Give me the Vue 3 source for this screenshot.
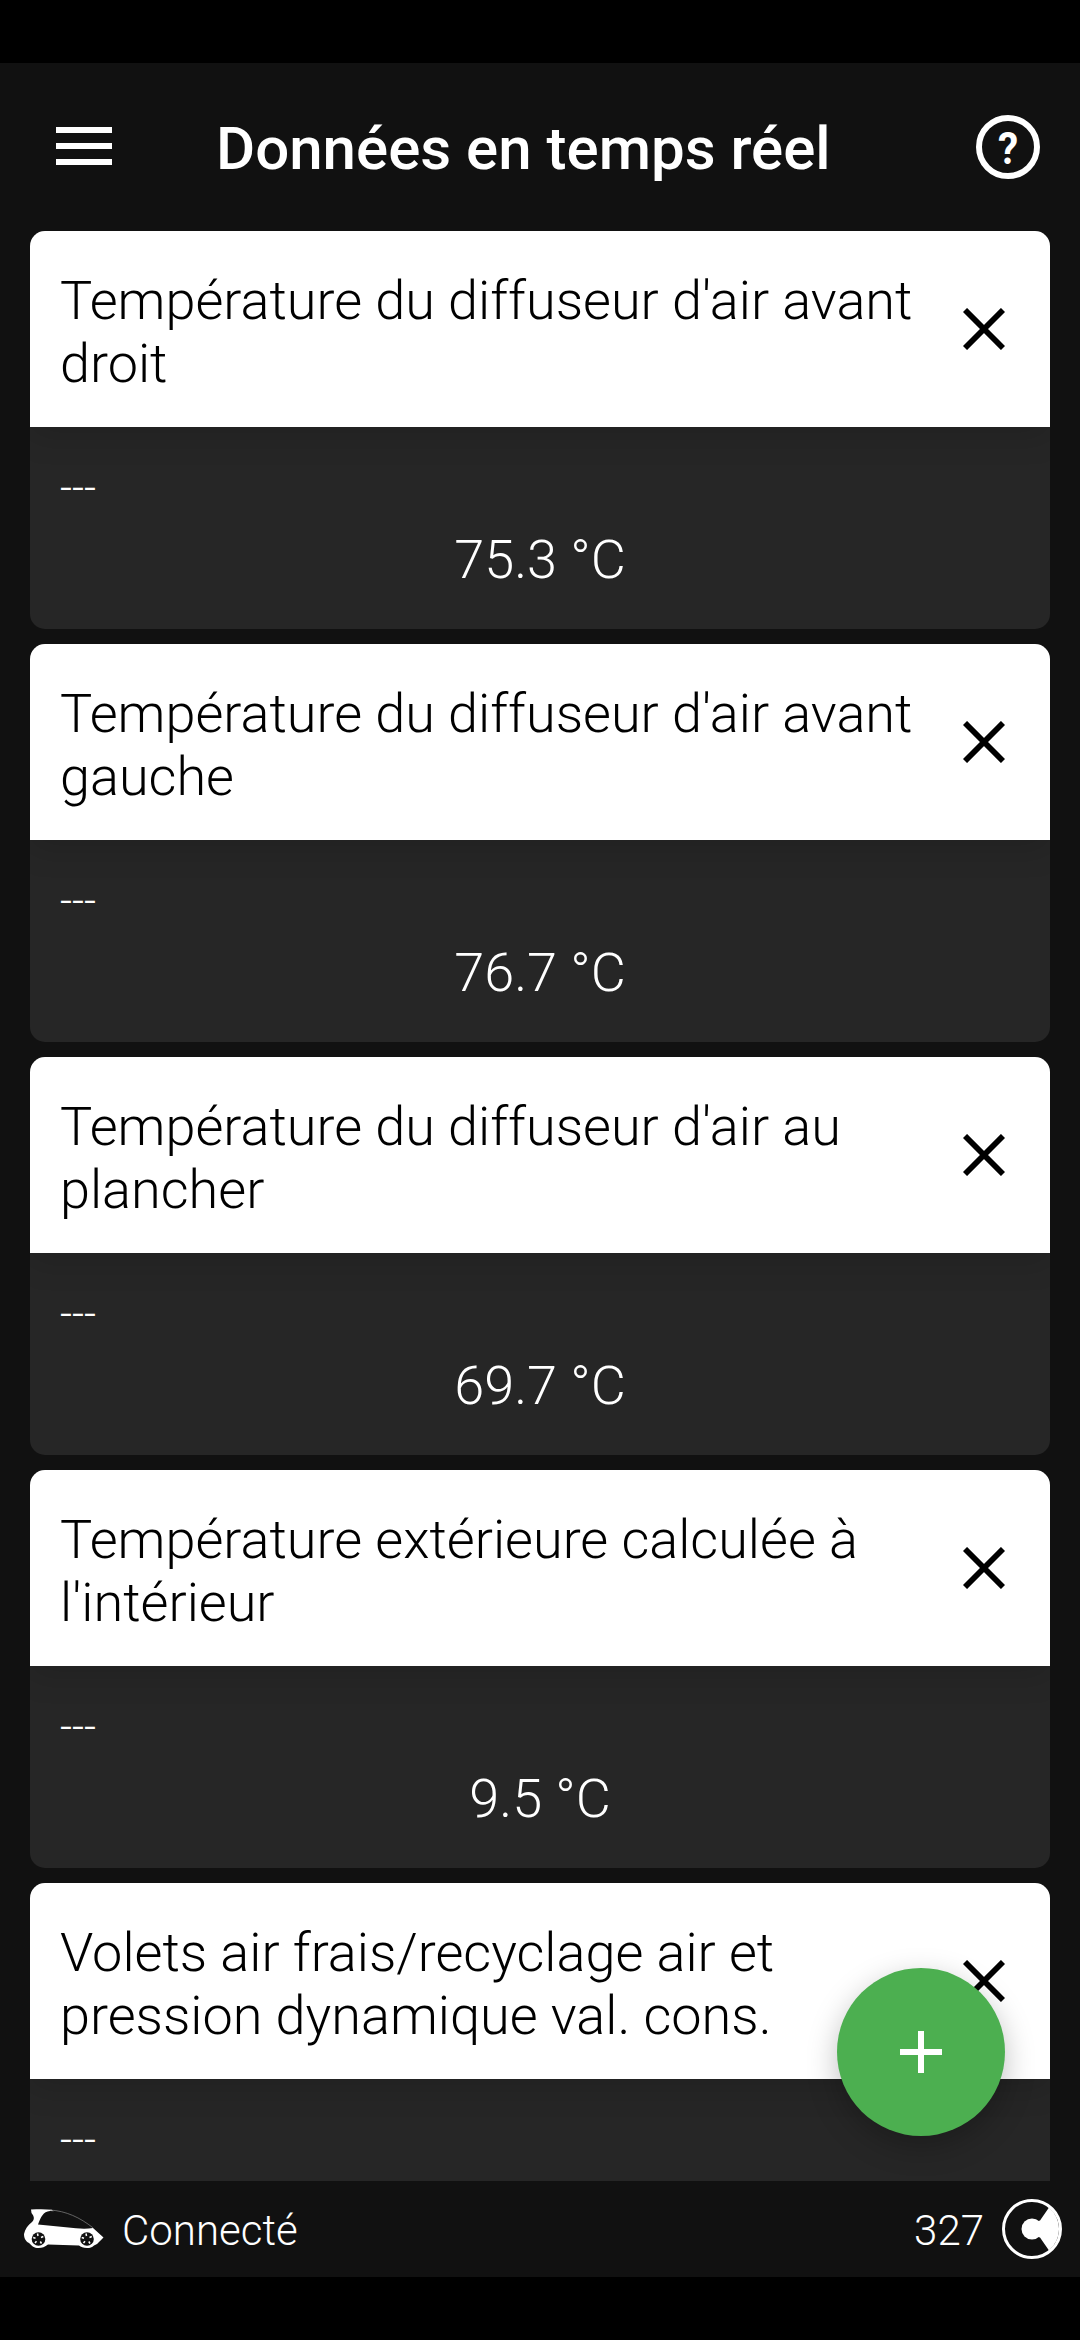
<template>
  <div class="screen">
    <header class="toolbar">
      <button class="menu" aria-label="Menu">
        <span></span>
        <span></span>
        <span></span>
      </button>
      <h1>Données en temps réel</h1>
      <svg class="help" viewBox="0 0 64 64">
        <circle cx="32" cy="32" r="29" />
        <text transform="translate(32 48.500) scale(0.9 1)" text-anchor="middle">?</text>
      </svg>
    </header>

    <main class="list">
      <div v-for="item in items" :key="item.id" class="card">
        <div class="card-header">
          <p>{{ item.name }}</p>
          <button class="remove" aria-label="Supprimer" @click="removeItem(item)">
            <svg viewBox="0 0 42 42">
              <path d="M2 2L40 40M40 2L2 40" />
            </svg>
          </button>
        </div>
        <div class="card-body">
          <span class="state">---</span>
          <span class="value">{{ item.value }}</span>
        </div>
      </div>
    </main>

    <footer class="status">
      <svg class="car" viewBox="0 0 80 40">
        <path
          class="body"
          d="M7 .5C15 0 22 0 28 .8L30 3L60 19L69 19L79.500 28.500L73 35L70 36.500C68 38.500 66 39 63 39C59 39 57 38 55 36.500L24 35.500C21 38 18 39 14.500 39C10 39 8 37 5 34C1 32 0 28 0 25C1 20 4 16 8 13C11 10 10 7 7.500 4Z"
        />
        <path class="glass" d="M14 15.500C17 8 19 2.500 26 2C42 2 56 9 69 19C64 20 58 20 52 19.300Z" />
        <path class="roof" d="M26 1C42 2 56 8.500 69 18.800" />
        <g v-for="x in [14.5, 63]" :key="x" :transform="`translate(${x} 30)`">
          <circle class="tyre" r="6.800" />
          <path class="spokes" d="M-1 -5.500L-.5 -3M4.800 -2.500L2.500 -1.500M3 4.500L1.800 2.500M-3.500 4L-2 2.200M-5.300 -1.500L-3 -.8" />
        </g>
      </svg>
      <span>Connecté</span>
      <span class="count">327</span>
      <svg class="logo" viewBox="0 0 60 60">
        <circle class="ring" cx="30" cy="30" r="28.500" />
        <circle cx="30" cy="30" r="10.500" />
        <path d="M30 30L36.500 22L38 21.500L47 8.500A28 28 0 0 1 47 51.500L38 38.500L36.500 38Z" />
      </svg>
    </footer>

    <button class="fab" aria-label="Ajouter">
      <svg viewBox="0 0 42 42">
        <path d="M21 0V42M0 21H42" />
      </svg>
    </button>
  </div>
</template>

<script setup>
import { ref } from "vue";

const items = ref([
  { id: 1, name: "Température du diffuseur d'air avant droit", value: "75.3 °C" },
  { id: 2, name: "Température du diffuseur d'air avant gauche", value: "76.7 °C" },
  { id: 3, name: "Température du diffuseur d'air au plancher", value: "69.7 °C" },
  { id: 4, name: "Température extérieure calculée à l'intérieur", value: "9.5 °C" },
  { id: 5, name: "Volets air frais/recyclage air et pression dynamique val. cons.", value: "" },
]);

function removeItem(item) {
  items.value = items.value.filter((i) => i.id !== item.id);
}
</script>

<style>
body {
  margin: 0;
  background: #000;
}
</style>

<style scoped>
.screen {
  position: relative;
  box-sizing: border-box;
  width: 1080px;
  height: 2340px;
  padding: 63px 0;
  display: flex;
  flex-direction: column;
  overflow: hidden;
  background: #000;
  color: #fff;
  font-family: Roboto, sans-serif;
  font-weight: 300;
}

button {
  padding: 0;
  border: none;
  background: transparent;
  cursor: pointer;
}

svg {
  display: block;
}

.toolbar {
  flex: none;
  box-sizing: border-box;
  height: 168px;
  padding: 0 40px 0 56px;
  display: flex;
  align-items: center;
  background: #111;
}

.menu {
  width: 56px;
  margin-bottom: 2px;
  display: flex;
  flex-direction: column;
  gap: 10px;
}

.menu span {
  width: 56px;
  height: 6px;
  background: #fff;
}

.toolbar h1 {
  flex: 1;
  margin: 4px 0 0 104px;
  font-size: 60px;
  font-weight: 500;
  line-height: 70px;
  white-space: nowrap;
}

.help {
  width: 64px;
  height: 64px;
}

.help circle {
  fill: none;
  stroke: #fff;
  stroke-width: 6;
}

.help text {
  fill: #fff;
  font-size: 45px;
  font-weight: 700;
}

.list {
  flex: none;
  box-sizing: border-box;
  height: 1950px;
  padding: 0 30px;
  display: flex;
  flex-direction: column;
  gap: 15px;
  overflow: hidden;
  background: #111;
}

.card {
  flex: none;
  height: 398px;
  display: flex;
  flex-direction: column;
  border-radius: 15px;
  overflow: hidden;
  background: #262626;
}

.card-header {
  box-sizing: border-box;
  height: 196px;
  padding: 0 45px 0 30px;
  display: flex;
  align-items: center;
  justify-content: space-between;
  background: #fff;
  color: #000;
  box-shadow: 0 8px 30px rgba(0, 0, 0, 0.15);
}

.card-header p {
  width: 870px;
  margin: 6px 0 0;
  font-size: 54px;
  line-height: 63px;
}

.remove svg {
  width: 42px;
  height: 42px;
  fill: none;
  stroke: #000;
  stroke-width: 5.8;
}

.card-body {
  padding: 36px 30px 0;
  display: flex;
  flex-direction: column;
}

.state {
  font-size: 42px;
  line-height: 49px;
}

.value {
  margin-top: 16px;
  font-size: 54px;
  line-height: 63px;
  text-align: center;
}

.status {
  flex: none;
  box-sizing: border-box;
  height: 96px;
  padding: 0 18px 0 24px;
  display: flex;
  align-items: center;
  background: #111;
  font-size: 42px;
  line-height: 49px;
}

.status span {
  margin-top: 3px;
}

.car {
  width: 80px;
  height: 40px;
  margin-right: 18px;
}

.car .body {
  fill: #fff;
}

.car .glass,
.car .tyre {
  fill: #111;
}

.car .roof {
  fill: none;
  stroke: #777;
  stroke-width: 0.8;
}

.car .spokes {
  fill: none;
  stroke: #fff;
  stroke-width: 1.5;
}

.count {
  margin-left: auto;
}

.logo {
  width: 60px;
  height: 60px;
  margin-left: 18px;
  fill: #fff;
}

.logo .ring {
  fill: none;
  stroke: #fff;
  stroke-width: 3;
}

/* floating button, sits over the list */
.fab {
  position: absolute;
  right: 75px;
  bottom: 204px;
  width: 168px;
  height: 168px;
  display: flex;
  align-items: center;
  justify-content: center;
  border-radius: 50%;
  background: #4caf50;
  box-shadow: 0 10px 30px rgba(0, 0, 0, 0.25);
}

.fab svg {
  width: 42px;
  height: 42px;
  fill: none;
  stroke: #fff;
  stroke-width: 6;
}
</style>
